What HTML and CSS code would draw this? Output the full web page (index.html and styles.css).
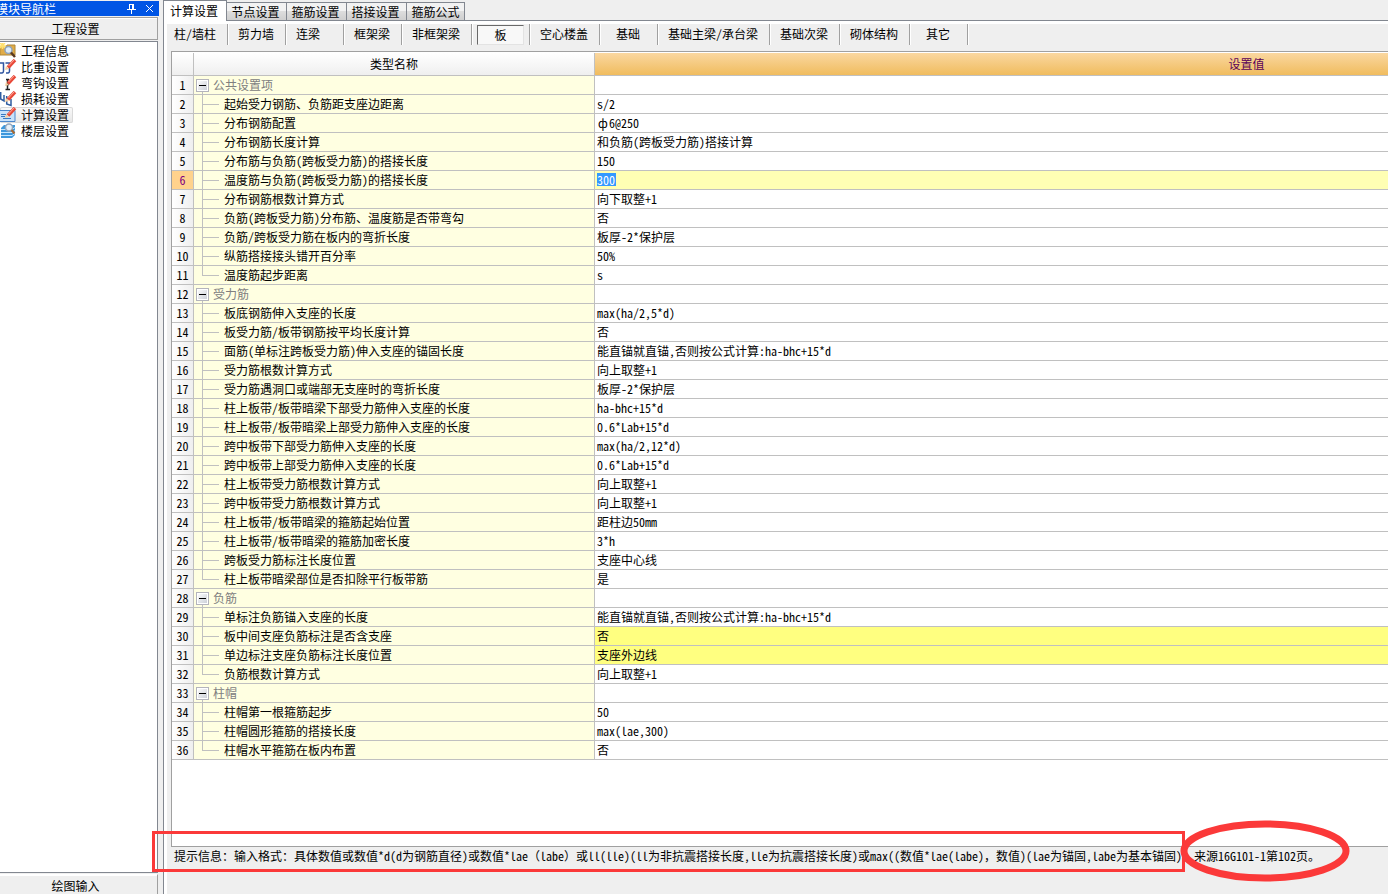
FILE: index.html
```html
<!DOCTYPE html>
<html lang="zh-CN">
<head>
<meta charset="utf-8">
<title>工程设置</title>
<link rel="stylesheet" href="styles.css">
</head>
<body>
<aside class="nav">
  <header class="nav-title">
    <h1>模块导航栏</h1>
    <button class="title-btn" aria-label="固定"><svg width="9" height="10" viewBox="0 0 9 10"><path d="M2.500 0V5.500M2 .5H6M5.500 0V5.500M6.500 0V5.500M0 5.500H9M4.500 6V10" fill="none" stroke="#fff"/></svg></button>
    <button class="title-btn" aria-label="关闭"><svg width="9" height="9" viewBox="0 0 9 9"><path d="M1 1L8 8M8 1L1 8" fill="none" stroke="#fff"/></svg></button>
  </header>
  <button class="section-btn">工程设置</button>
  <ul class="nav-list">
    <li><a href="#"><svg class="icon" viewBox="0 0 17 16"><path d="M0 4h6l1-2h8v10H0z" fill="#e0ac48" stroke="#b08838"/><path d="M0 3h6M2.500 0v6M0 0l5 5M5 0L0 5" stroke="#ffe070" stroke-width="1.500"/><circle cx="8.500" cy="7" r="3.500" fill="#dcecfa" stroke="#8fa4bc" stroke-width="1.500"/><path d="M11 9.500L15 14" stroke="#5a3a20" stroke-width="2.500"/></svg>工程信息</a></li>
    <li><a href="#"><svg class="icon" viewBox="0 0 17 16"><path d="M0 4h3.500v8c0 2-1 2-3.500 2M5.500 4h4v8c0 2-1 2-3.500 2" fill="none" stroke="#2f55a0" stroke-width="1.500"/><path d="M8 8.500L15 1" stroke="#e84838" stroke-width="3.500"/><path d="M8.500 7L14 1" stroke="#ffa898"/><path d="M5 11l1-4 3 3z" fill="#f4cfa0"/></svg>比重设置</a></li>
    <li><a href="#"><svg class="icon" viewBox="0 0 17 16"><path d="M6 4.500H9M7.500 5V14M5.500 14.500H10M6 9.500H9" fill="none" stroke="#222" stroke-width="1.500"/><path d="M8 8.500L15 1" stroke="#e84838" stroke-width="3.500"/><path d="M8.500 7L14 1" stroke="#ffa898"/><path d="M5 11l1-4 3 3z" fill="#f4cfa0"/></svg>弯钩设置</a></li>
    <li><a href="#"><svg class="icon" viewBox="0 0 17 16"><path d="M.7 1V8L4 10V4M6.700 5V13L11 14.500V8" fill="none" stroke="#2f5ca0" stroke-width="1.500"/><path d="M8 8.500L15 1" stroke="#e84838" stroke-width="3.500"/><path d="M8.500 7L14 1" stroke="#ffa898"/><path d="M5 11l1-4 3 3z" fill="#f4cfa0"/></svg>损耗设置</a></li>
    <li><a href="#" class="current"><svg class="icon" viewBox="0 0 17 16"><path d="M-1 3.500h16v11H-1z" fill="#c8e2fb" stroke="#4a86cc"/><path d="M1 7.500h5M1 9.500h4M3 11.500h8" stroke="#3878c0"/><path d="M8 8.500L15 1" stroke="#e84838" stroke-width="3.500"/><path d="M8.500 7L14 1" stroke="#ffa898"/><path d="M5 11l1-4 3 3z" fill="#f4cfa0"/></svg>计算设置</a></li>
    <li><a href="#"><svg class="icon" viewBox="0 0 17 16"><path d="M1 5l3-3h11v10l-3 3H1z" fill="#3f98dc"/><path d="M1 6.500h11l3-2M1 9.500h11l3-2M1 12.500h11l3-2" fill="none" stroke="#c4e6ff"/><circle cx="9" cy="4.500" r="3.500" fill="#e8f0f8" stroke="#93a6bc" stroke-width="1.500"/><path d="M11.500 7l3 3.500" stroke="#a86830" stroke-width="2"/></svg>楼层设置</a></li>
  </ul>
  <button class="section-btn bottom">绘图输入</button>
</aside>
<main class="main">
  <nav class="tabs">
    <button class="tab active">计算设置</button><button class="tab">节点设置</button><button class="tab">箍筋设置</button><button class="tab">搭接设置</button><button class="tab">箍筋公式</button>
  </nav>
  <div class="page">
    <div class="toolbar">
      <button>柱/墙柱</button><button>剪力墙</button><button class="start">连梁</button><button>框架梁</button><button>非框架梁</button><button class="pressed"><span>板</span></button><button>空心楼盖</button><button>基础</button><button>基础主梁/承台梁</button><button>基础次梁</button><button>砌体结构</button><button>其它</button>
    </div>
    <div class="grid">
      <table>
        <colgroup><col class="c-num"><col class="c-name"><col class="c-value"></colgroup>
        <thead><tr><th></th><th>类型名称</th><th class="hot">设置值</th></tr></thead>
        <tbody>
          <tr class="group"><th>1</th><td><button class="toggle" aria-label="折叠"></button>公共设置项</td><td></td></tr>
          <tr><th>2</th><td>起始受力钢筋、负筋距支座边距离</td><td>s/2</td></tr>
          <tr><th>3</th><td>分布钢筋配置</td><td><span class="wide">ф</span>6@250</td></tr>
          <tr><th>4</th><td>分布钢筋长度计算</td><td>和负筋(跨板受力筋)搭接计算</td></tr>
          <tr><th>5</th><td>分布筋与负筋(跨板受力筋)的搭接长度</td><td>150</td></tr>
          <tr class="editing"><th>6</th><td>温度筋与负筋(跨板受力筋)的搭接长度</td><td><input value="300" aria-label="温度筋与负筋(跨板受力筋)的搭接长度"></td></tr>
          <tr><th>7</th><td>分布钢筋根数计算方式</td><td>向下取整+1</td></tr>
          <tr><th>8</th><td>负筋(跨板受力筋)分布筋、温度筋是否带弯勾</td><td>否</td></tr>
          <tr><th>9</th><td>负筋/跨板受力筋在板内的弯折长度</td><td>板厚-2*保护层</td></tr>
          <tr><th>10</th><td>纵筋搭接接头错开百分率</td><td>50%</td></tr>
          <tr class="last"><th>11</th><td>温度筋起步距离</td><td>s</td></tr>
          <tr class="group"><th>12</th><td><button class="toggle" aria-label="折叠"></button>受力筋</td><td></td></tr>
          <tr><th>13</th><td>板底钢筋伸入支座的长度</td><td>max(ha/2,5*d)</td></tr>
          <tr><th>14</th><td>板受力筋/板带钢筋按平均长度计算</td><td>否</td></tr>
          <tr><th>15</th><td>面筋(单标注跨板受力筋)伸入支座的锚固长度</td><td>能直锚就直锚,否则按公式计算:ha-bhc+15*d</td></tr>
          <tr><th>16</th><td>受力筋根数计算方式</td><td>向上取整+1</td></tr>
          <tr><th>17</th><td>受力筋遇洞口或端部无支座时的弯折长度</td><td>板厚-2*保护层</td></tr>
          <tr><th>18</th><td>柱上板带/板带暗梁下部受力筋伸入支座的长度</td><td>ha-bhc+15*d</td></tr>
          <tr><th>19</th><td>柱上板带/板带暗梁上部受力筋伸入支座的长度</td><td>0.6*Lab+15*d</td></tr>
          <tr><th>20</th><td>跨中板带下部受力筋伸入支座的长度</td><td>max(ha/2,12*d)</td></tr>
          <tr><th>21</th><td>跨中板带上部受力筋伸入支座的长度</td><td>0.6*Lab+15*d</td></tr>
          <tr><th>22</th><td>柱上板带受力筋根数计算方式</td><td>向上取整+1</td></tr>
          <tr><th>23</th><td>跨中板带受力筋根数计算方式</td><td>向上取整+1</td></tr>
          <tr><th>24</th><td>柱上板带/板带暗梁的箍筋起始位置</td><td>距柱边50mm</td></tr>
          <tr><th>25</th><td>柱上板带/板带暗梁的箍筋加密长度</td><td>3*h</td></tr>
          <tr><th>26</th><td>跨板受力筋标注长度位置</td><td>支座中心线</td></tr>
          <tr class="last"><th>27</th><td>柱上板带暗梁部位是否扣除平行板带筋</td><td>是</td></tr>
          <tr class="group"><th>28</th><td><button class="toggle" aria-label="折叠"></button>负筋</td><td></td></tr>
          <tr><th>29</th><td>单标注负筋锚入支座的长度</td><td>能直锚就直锚,否则按公式计算:ha-bhc+15*d</td></tr>
          <tr class="changed"><th>30</th><td>板中间支座负筋标注是否含支座</td><td>否</td></tr>
          <tr class="changed"><th>31</th><td>单边标注支座负筋标注长度位置</td><td>支座外边线</td></tr>
          <tr class="last"><th>32</th><td>负筋根数计算方式</td><td>向上取整+1</td></tr>
          <tr class="group"><th>33</th><td><button class="toggle" aria-label="折叠"></button>柱帽</td><td></td></tr>
          <tr><th>34</th><td>柱帽第一根箍筋起步</td><td>50</td></tr>
          <tr><th>35</th><td>柱帽圆形箍筋的搭接长度</td><td>max(lae,300)</td></tr>
          <tr class="last"><th>36</th><td>柱帽水平箍筋在板内布置</td><td>否</td></tr>
        </tbody>
      </table>
    </div>
    <footer class="hint">
      <p>提示信息：输入格式：具体数值或数值*d(d为钢筋直径)或数值*lae（labe）或ll(lle)(ll为非抗震搭接长度,lle为抗震搭接长度)或max((数值*lae(labe)，数值)(lae为锚固,labe为基本锚固)，来源16G101-1第102页。</p>
      <svg class="marks" width="1200" height="64" viewBox="0 0 1200 64"><path d="M3.500 14.500H1033.500V52.500H3.500Z" fill="none" stroke="#fb3939" stroke-width="3"/><ellipse cx="1115" cy="33" rx="81" ry="27" fill="none" stroke="#fb3939" stroke-width="7"/></svg>
    </footer>
  </div>
</main>
</body>
</html>
```
FILE: styles.css
```css
* { box-sizing: border-box; }

body {
  margin: 0;
  display: flex;
  height: 100vh;
  overflow: hidden;
  background: #efefef;
  color: #000;
  font: 12px/16px "Noto Sans Mono CJK SC", "Noto Sans CJK SC", "Liberation Mono", monospace;
}

button, input {
  margin: 0;
  padding: 0;
  border: 0;
  background: none;
  color: inherit;
  font: inherit;
}

/* Left navigation */
.nav {
  flex: none;
  display: flex;
  flex-direction: column;
  width: 159px;
  padding-top: 1px;
}

.nav-title {
  display: flex;
  align-items: center;
  gap: 8px;
  height: 15px;
  padding-right: 4px;
  background: #0055e5;
  color: #fff;
}

.nav-title h1 {
  flex: 1;
  margin: 0;
  text-indent: -4px;
  font-size: 12px;
  font-weight: 400;
  line-height: 15px;
}

.title-btn {
  display: flex;
  width: 10px;
}

.section-btn {
  flex: none;
  height: 23px;
  margin: 1px 1px 1px 0;
  padding-right: 6px;
  border: solid #a0a0a0;
  border-width: 1px 1px 1px 0;
  box-shadow: inset 0 1px #fff;
}

.section-btn.bottom {
  height: 20px;
  margin-bottom: 0;
  padding-top: 2px;
  border-top-color: #fff;
  border-bottom: 0;
}

.nav-list {
  flex: 1;
  margin: 0 1px 0 0;
  padding: 1px 0;
  border: solid #828790;
  border-width: 1px 1px 1px 0;
  background: #fff;
  list-style: none;
}

.nav-list li { height: 16px; }

.nav-list a {
  display: inline-flex;
  gap: 4px;
  padding-right: 4px;
  border-radius: 2px;
  color: #000;
  text-decoration: none;
}

.nav-list .current {
  background: linear-gradient(#fafafa, #e6e6e6);
  box-shadow: inset 0 0 0 1px #d9d9d9;
}

.icon {
  width: 17px;
  height: 16px;
  fill: none;
}

/* Main area */
.main {
  flex: 1;
  display: flex;
  flex-direction: column;
  min-width: 0;
  margin-left: 4px;
  border-left: 1px solid #828790;
}

.tabs {
  display: flex;
  align-items: flex-end;
  height: 21px;
  border-bottom: 1px solid #828790;
}

.tab {
  width: 60px;
  height: 18px;
  padding-right: 2px;
  border: solid #828790;
  border-width: 1px 1px 0 0;
  background: linear-gradient(#f2f2f2 45%, #dddddd 50%, #cfcfcf);
}

.tab.active {
  width: 63px;
  height: 21px;
  margin-bottom: -1px;
  background: #fff;
}

.tab:last-child { width: 58px; padding-right: 0; }

.page {
  flex: 1;
  display: flex;
  flex-direction: column;
  min-height: 0;
  border: solid #fff;
  border-width: 3px 0 0 3px;
}

.toolbar {
  display: flex;
  height: 27px;
  padding-bottom: 6px;
}

.toolbar button {
  min-width: 58px;
  padding: 0 11px 2px 10px;
  border-right: 1px solid #a0a0a0;
  box-shadow: 1px 0 #fff;
  white-space: nowrap;
}

.toolbar button:first-child { padding: 0 11px 2px 7px; }

.toolbar .start { text-align: left; }

.toolbar .pressed { padding: 0 5px; }

.toolbar .pressed span {
  display: block;
  height: 20px;
  border: 1px solid;
  border-color: #696969 #e3e3e3 #e3e3e3 #696969;
  background: #f8f8f8;
  line-height: 18px;
}

.grid {
  flex: 1;
  min-height: 0;
  margin-left: 4px;
  padding-top: 1px;
  overflow: hidden;
  border: solid #a0a0a0;
  border-width: 1px 0 1px 1px;
  background: #fff;
}

table {
  width: 1727px;
  table-layout: fixed;
  border-spacing: 0;
}

.c-num { width: 22px; }
.c-name { width: 401px; }

th, td {
  height: 19px;
  padding: 0;
  border: solid #c0c0c0;
  border-width: 0 1px 1px 0;
  font-weight: 400;
  line-height: 18px;
  white-space: nowrap;
}

thead th {
  height: 23px;
  background: linear-gradient(#fff, #efefef);
}

thead .hot {
  background: linear-gradient(#fad7a0, #f0bc5e);
  color: #5a005a;
}

tbody th { background: linear-gradient(90deg, #fff, #efefef); }

tbody td:nth-child(2) {
  padding-left: 30px;
  background:
    linear-gradient(#c0c0c0, #c0c0c0) 8px 0 / 1px 100% no-repeat,
    linear-gradient(#c0c0c0, #c0c0c0) 8px 9px / 17px 1px no-repeat,
    #ffffe1;
}

tbody .last td:nth-child(2) {
  background-size: 1px 10px, 17px 1px, auto;
}

tbody .group td:nth-child(2) {
  padding-left: 2px;
  background: linear-gradient(#c0c0c0, #c0c0c0) 8px 15px / 1px 4px no-repeat, #ffffe1;
  color: #808080;
}

td:nth-child(3) { padding-left: 2px; }

.toggle {
  width: 13px;
  height: 13px;
  margin: 3px 4px 0 0;
  border: 1px solid #b4b4bc;
  box-shadow: inset 0 0 0 1px #fff;
  background:
    linear-gradient(#000, #000) center / 7px 1px no-repeat,
    linear-gradient(135deg, #fff, #c8ccd4);
  vertical-align: top;
}

.wide {
  display: inline-block;
  width: 12px;
  text-align: center;
}

.editing th {
  background: #ffd28c;
  color: #800080;
}

.editing td:nth-child(3) { background: #ffffb4; }

.changed td:nth-child(3) { background: #ffff80; }

input {
  display: block;
  width: 19px;
  height: 13px;
  margin-bottom: 2px;
  background: #3399ff;
  color: #fff;
  line-height: 13px;
}

.hint {
  position: relative;
  height: 47px;
  padding: 1px 0 0 7px;
}

.hint p {
  margin: 0;
  white-space: nowrap;
}

.marks {
  position: absolute;
  left: -17px;
  top: -29px;
}
```
